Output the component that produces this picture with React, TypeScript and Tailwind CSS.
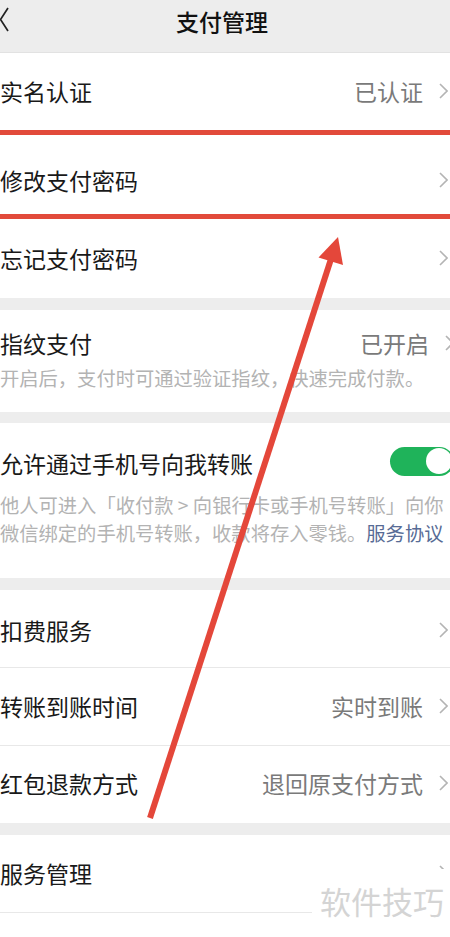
import React from 'react';

const font = "font-['Noto_Sans_CJK_SC','Noto_Sans',sans-serif]";

const Chevron: React.FC = () => (
  <svg width="9" height="16" viewBox="0 0 9 16">
    <path d="M1 1l7 7-7 7" fill="none" stroke="#b4b4b4" strokeWidth="1.6" />
  </svg>
);

type RowProps = {
  label: string;
  value?: string;
  className?: string;
};

const Row: React.FC<RowProps> = ({ label, value, className = '' }) => (
  <div className={`flex items-center justify-between bg-white pr-[2px] ${className}`}>
    <span className="text-[23px] leading-[30px] text-[#191919]">{label}</span>
    <div className="flex items-center gap-[16px]">
      {value && <span className="text-[23px] leading-[30px] text-[#7a7a7a]">{value}</span>}
      <Chevron />
    </div>
  </div>
);

const Gap: React.FC<{ className?: string }> = ({ className = 'h-[12px]' }) => (
  <div className={`bg-[#ededed] ${className}`} />
);

const App: React.FC = () => {
  return (
    <div className={`relative w-[450px] h-[937px] overflow-hidden bg-white ${font}`}>
      {/* header */}
      <div className="grid h-[53px] grid-cols-[1fr_auto_1fr] items-center bg-[#ededed] border-b border-[#e2e2e2] pb-[11px]">
        <svg width="10" height="28" viewBox="0 0 10 28" className="self-start mt-[7px]">
          <path d="M8 1L0.5 12.5 8 24" fill="none" stroke="#222" strokeWidth="1.7" />
        </svg>
        <span className="pr-[6px] text-[23px] leading-[30px] font-medium text-[#111]">支付管理</span>
        <div />
      </div>

      <Row label="实名认证" value="已认证" className="h-[80px] pb-[4px]" />
      <div className="h-px bg-[#e8e8e8]" />
      <Row label="修改支付密码" className="h-[86px] pt-[10px] pb-[4px]" />
      <Row label="忘记支付密码" className="h-[78px] pt-[2px] pb-[4px]" />

      <Gap />

      {/* fingerprint */}
      <div className="bg-white pt-[18px] pb-[20px]">
        <div className="flex items-center justify-between">
          <span className="text-[23px] leading-[30px] text-[#191919]">指纹支付</span>
          <div className="flex items-center gap-[16px] -mr-[4px]">
            <span className="text-[23px] leading-[30px] text-[#7a7a7a]">已开启</span>
            <Chevron />
          </div>
        </div>
        <p className="mt-[6px] text-[19.3px] leading-[28px] text-[#b3b3b3] whitespace-nowrap">
          开启后，支付时可通过验证指纹，快速完成付款。
        </p>
      </div>

      <Gap className="h-[11px]" />

      {/* transfer by phone */}
      <div className="bg-white pt-[25px] pb-[31px]">
        <div className="flex h-[30px] items-center justify-between">
          <span className="text-[23px] leading-[30px] text-[#191919]">允许通过手机号向我转账</span>
          <div className="-mr-[4px] mb-[4px] flex h-[29px] w-[64px] shrink-0 items-center justify-end rounded-full bg-[#1fb35a] pr-[2px]">
            <div className="h-[26px] w-[26px] rounded-full bg-white" />
          </div>
        </div>
        <p className="mt-[13px] text-[19.3px] leading-[28px] text-[#b3b3b3] whitespace-nowrap">
          他人可进入「收付款 &gt; 向银行卡或手机号转账」向你
        </p>
        <p className="text-[19.3px] leading-[28px] text-[#b3b3b3] whitespace-nowrap">
          微信绑定的手机号转账，收款将存入零钱。<span className="text-[#576b95]">服务协议</span>
        </p>
      </div>

      <Gap />

      <Row label="扣费服务" className="h-[77px] pt-[6px] pb-[4px]" />
      <div className="h-px bg-[#e8e8e8]" />
      <Row label="转账到账时间" value="实时到账" className="h-[77px] pt-[3px] pb-[4px]" />
      <div className="h-px bg-[#e8e8e8]" />
      <Row label="红包退款方式" value="退回原支付方式" className="h-[77px] pb-[4px]" />

      <Gap />

      <Row label="服务管理" className="h-[77px] pt-[3px] pb-[4px]" />
      <div className="h-px bg-[#e8e8e8]" />

      {/* watermark stamped over the screenshot */}
      <div className="absolute left-[312px] top-[869px] bg-white pl-[8px] pr-[6px] pt-[10px] pb-[6px]">
        <span className="text-[31px] leading-[44px] text-[#d4d4d4]">软件技巧</span>
      </div>

      {/* annotation overlay: red frame lines + arrow */}
      <div className="absolute left-0 top-[130px] h-[5px] w-full bg-[#e24a3b]" />
      <div className="absolute left-0 top-[214px] h-[5px] w-full bg-[#e24a3b]" />
      <svg width="450" height="937" viewBox="0 0 450 937" className="pointer-events-none absolute left-0 top-0">
        <line x1="150" y1="818" x2="331" y2="259" stroke="#e4473a" strokeWidth="6" />
        <polygon points="338,237 318.5,257.5 343,265" fill="#e4473a" />
      </svg>
    </div>
  );
};

export default App;
